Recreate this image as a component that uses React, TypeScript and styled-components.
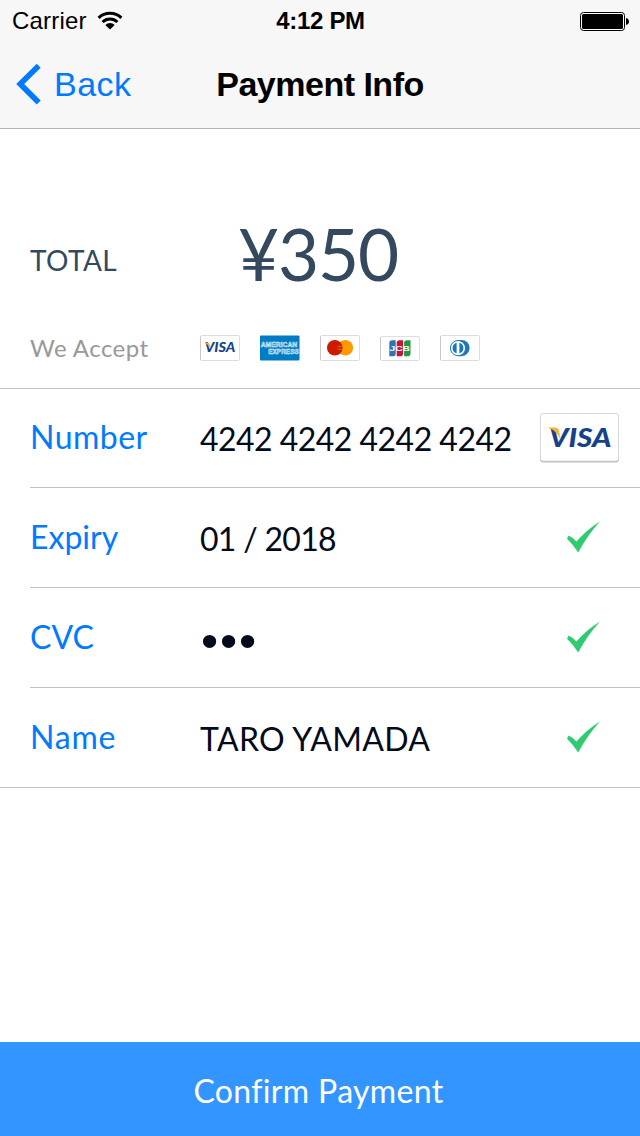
import React from "react";
import styled, { createGlobalStyle } from "styled-components";

const GlobalStyle = createGlobalStyle`
  * { box-sizing: border-box; }
  body { margin: 0; background: #fff; }
`;

const Screen = styled.div`
  width: 640px;
  height: 1136px;
  display: flex;
  flex-direction: column;
  background: #fff;
  overflow: hidden;
  white-space: nowrap;
  font-family: Lato, "Liberation Sans", sans-serif;
`;

const Header = styled.header`
  height: 129px;
  background: #f7f7f7;
  border-bottom: 1px solid #b2b2b2;
  font-family: "Liberation Sans", Arial, sans-serif;
`;

const StatusBar = styled.div`
  height: 40px;
  padding: 1px 11px 0 12px;
  display: grid;
  grid-template-columns: 1fr auto 1fr;
  align-items: center;
  font-size: 24px;
  line-height: 40px;
  color: #000;
`;

const Carrier = styled.div`
  display: flex;
  align-items: center;
  gap: 10px;
  letter-spacing: 0.2px;
`;

const Clock = styled.div`
  font-weight: 700;
  letter-spacing: -0.3px;
`;

const BatterySlot = styled.div`
  display: flex;
  justify-content: flex-end;
`;

const NavBar = styled.nav`
  height: 88px;
  padding: 0 16px;
  display: grid;
  grid-template-columns: 1fr auto 1fr;
  align-items: center;
  line-height: 88px;
  font-size: 34px;
`;

const BackButton = styled.a`
  display: flex;
  align-items: center;
  gap: 12px;
  color: #007aff;
  letter-spacing: 0.5px;
`;

const Title = styled.h1`
  margin: 0;
  font-size: 34px;
  font-weight: 700;
  letter-spacing: -0.5px;
  color: #000;
`;

const Summary = styled.section`
  height: 260px;
  padding: 84px 0 0 30px;
  border-bottom: 1px solid #c4c4c4;
`;

const TotalRow = styled.div`
  height: 80px;
  display: flex;
  align-items: center;
  color: #34495e;
`;

const TotalLabel = styled.div`
  width: 208px;
  padding-top: 14px;
  font-size: 28px;
  line-height: 34px;
  letter-spacing: 0.4px;
`;

const Amount = styled.div`
  padding-top: 2px;
  font-size: 71px;
  line-height: 80px;
  letter-spacing: -1.2px;
`;

const AcceptRow = styled.div`
  height: 30px;
  margin-top: 39px;
  display: flex;
  align-items: center;
`;

const AcceptLabel = styled.div`
  width: 170px;
  padding-top: 2px;
  font-size: 24px;
  line-height: 30px;
  letter-spacing: 0.45px;
  color: #999;
`;

const Brands = styled.div`
  display: flex;
  gap: 20px;
  padding-top: 2px;

  svg { display: block; }
`;

const Form = styled.main`
  flex: 1;
`;

const Field = styled.div<{ $first?: boolean; $last?: boolean }>`
  height: ${(p) => (p.$first ? 99 : 100)}px;
  margin-left: ${(p) => (p.$last ? 0 : 30)}px;
  padding-left: ${(p) => (p.$last ? 30 : 0)}px;
  display: flex;
  align-items: center;
  border-bottom: 1px solid #c4c4c4;
  font-size: 32px;
  line-height: 40px;
`;

const FieldLabel = styled.label<{ $track?: number }>`
  width: 170px;
  padding-bottom: 2px;
  color: #007aff;
  letter-spacing: ${(p) => p.$track ?? 0}px;
`;

const FieldValue = styled.div<{ $track?: number }>`
  flex: 1;
  padding-top: 2px;
  color: #030a1a;
  letter-spacing: ${(p) => p.$track ?? 0}px;
`;

const Dots = styled.div`
  padding: 3px 0 0 1px;
  font-family: "Liberation Sans", sans-serif;
  font-size: 49px;
  line-height: 40px;
  letter-spacing: 1.9px;
`;

const FieldIcon = styled.div<{ $right: number }>`
  margin-right: ${(p) => p.$right}px;

  svg { display: block; }
`;

const ConfirmButton = styled.button`
  height: 94px;
  padding: 4px 3px 0 0;
  border: 0;
  background: #3395ff;
  color: #fff;
  font-family: inherit;
  font-size: 32px;
  line-height: 40px;
  letter-spacing: 0.35px;
`;

const Wifi = () => (
  <svg width="26" height="20" viewBox="0 0 26 20">
    <g fill="none" stroke="#000" strokeWidth="3">
      <path d="M1.6 6.8 A16.5 16.5 0 0 1 24.4 6.8" />
      <path d="M5.6 11 A10.6 10.6 0 0 1 20.4 11" />
    </g>
    <path d="M13 18.6 L8.3 13.9 A6.8 6.8 0 0 1 17.7 13.9Z" fill="#000" />
  </svg>
);

const Battery = () => (
  <svg width="49" height="19" viewBox="0 0 49 19">
    <rect x="0.5" y="0.5" width="44" height="18" rx="3" fill="#fff" stroke="#000" />
    <rect x="2" y="2" width="41" height="15" rx="1.5" fill="#000" />
    <path d="M46 6 Q49 6.6 49 9.5 Q49 12.4 46 13Z" fill="#000" />
  </svg>
);

const Chevron = () => (
  <svg width="26" height="42" viewBox="0 0 26 42">
    <path d="M22.7 2.7 L4.2 21.1 L22.7 39.5" fill="none" stroke="#007aff" strokeWidth="5.6" />
  </svg>
);

const Check = () => (
  <svg width="36" height="34" viewBox="0 0 36 34">
    <path d="M2 17.8 L3.6 14.4 Q7.5 16 11.4 20.6 Q21 9 35 0.4 Q22.5 14 13.2 31.4 Q8.5 24 2 17.8Z" fill="#2ecc71" />
  </svg>
);

const CardFrame = ({ top = 0.5 }: { top?: number }) => (
  <>
    <rect x="0.5" y={top} width="39" height={25.5 - top} rx="1.5" fill="#fff" stroke="#dedede" />
    <path d={`M0.5 25 V${top + 1}`} stroke="#c8c8c8" />
  </>
);

const VisaMark = () => (
  <>
    <text x="9" y="34" fontFamily="Lato, sans-serif" fontWeight="900" fontStyle="italic" fontSize="27" fill="#15428b" textLength="62.5" lengthAdjust="spacingAndGlyphs">
      VISA
    </text>
    <path d="M7.5 14.6 H15.5 Q18.6 15 19 17.5 L20.6 26.5 Q17 18 7.5 14.6Z" fill="#f8b133" />
  </>
);

const VisaLarge = () => (
  <svg width="80" height="51" viewBox="0 0 80 51">
    <rect x="0.5" y="1.5" width="78" height="47.5" rx="2.5" fill="#b9b9b9" stroke="#b9b9b9" />
    <rect x="0.5" y="0.5" width="78" height="47.5" rx="2.5" fill="#fff" stroke="#d8d8d8" />
    <VisaMark />
  </svg>
);

const VisaSmall = () => (
  <svg width="40" height="26" viewBox="0 0 40 26">
    <CardFrame />
    <g transform="translate(0.3 0.6) scale(0.49)">
      <VisaMark />
    </g>
  </svg>
);

const Amex = () => (
  <svg width="40" height="26" viewBox="0 0 40 26">
    <rect x="0" y="0.5" width="39.5" height="25" rx="1" fill="#007bc4" />
    <g fill="#3f9fd8" stroke="#d9edf8" strokeWidth="0.55" fontFamily="Liberation Sans, sans-serif" fontWeight="700" fontSize="7.5">
      <text x="0.7" y="11.6" textLength="36.5" lengthAdjust="spacingAndGlyphs">AMERICAN</text>
      <text x="8.2" y="19.3" textLength="30.6" lengthAdjust="spacingAndGlyphs">EXPRESS</text>
    </g>
  </svg>
);

const Mastercard = () => (
  <svg width="40" height="26" viewBox="0 0 40 26">
    <CardFrame />
    <circle cx="25.3" cy="12.8" r="7.8" fill="#ff9a00" />
    <circle cx="14.8" cy="12.8" r="7.8" fill="#cc1b00" />
    <path d="M17.5 11.3 H22.5 M17.5 14.2 H22.5" stroke="#f08000" strokeWidth="0.8" />
  </svg>
);

const Jcb = () => (
  <svg width="40" height="26" viewBox="0 0 40 26">
    <CardFrame top={1.5} />
    <path d="M9.3 8 Q9.3 5.2 12.1 5.2 H15.7 V18.4 Q15.7 21.2 12.9 21.2 H9.3Z" fill="#2f73b3" />
    <path d="M16.7 8 Q16.7 5.2 19.5 5.2 H23.1 V18.4 Q23.1 21.2 20.3 21.2 H16.7Z" fill="#c3163a" />
    <path d="M24.1 8 Q24.1 5.2 26.9 5.2 H30.5 V18.4 Q30.5 21.2 27.7 21.2 H24.1Z" fill="#1f9a3f" />
    <text x="9.6" y="16" fontFamily="Liberation Sans, sans-serif" fontWeight="700" fontSize="8" fill="#fff" textLength="20.4" lengthAdjust="spacingAndGlyphs">
      JCB
    </text>
  </svg>
);

const Diners = () => (
  <svg width="40" height="26" viewBox="0 0 40 26">
    <CardFrame />
    <path d="M18 5 H21.5 A8.1 8.1 0 0 1 21.5 21.2 H18Z" fill="#1a78b5" />
    <circle cx="18" cy="13.1" r="7.6" fill="#fff" stroke="#1a78b5" strokeWidth="1" />
    <path d="M16.6 7.8 A5.5 5.5 0 0 0 16.6 18.4Z M19.4 7.8 A5.5 5.5 0 0 1 19.4 18.4Z" fill="#1a78b5" />
  </svg>
);

export default function App() {
  return (
    <Screen>
      <GlobalStyle />
      <Header>
        <StatusBar>
          <Carrier>
            Carrier
            <Wifi />
          </Carrier>
          <Clock>4:12 PM</Clock>
          <BatterySlot>
            <Battery />
          </BatterySlot>
        </StatusBar>
        <NavBar>
          <BackButton>
            <Chevron />
            Back
          </BackButton>
          <Title>Payment Info</Title>
        </NavBar>
      </Header>

      <Summary>
        <TotalRow>
          <TotalLabel>TOTAL</TotalLabel>
          <Amount>¥350</Amount>
        </TotalRow>
        <AcceptRow>
          <AcceptLabel>We Accept</AcceptLabel>
          <Brands>
            <VisaSmall />
            <Amex />
            <Mastercard />
            <Jcb />
            <Diners />
          </Brands>
        </AcceptRow>
      </Summary>

      <Form>
        <Field $first>
          <FieldLabel $track={0.5}>Number</FieldLabel>
          <FieldValue $track={-0.53}>4242 4242 4242 4242</FieldValue>
          <FieldIcon $right={20}>
            <VisaLarge />
          </FieldIcon>
        </Field>
        <Field>
          <FieldLabel>Expiry</FieldLabel>
          <FieldValue $track={-0.7}>01 / 2018</FieldValue>
          <FieldIcon $right={39}>
            <Check />
          </FieldIcon>
        </Field>
        <Field>
          <FieldLabel>CVC</FieldLabel>
          <FieldValue>
            <Dots>•••</Dots>
          </FieldValue>
          <FieldIcon $right={39}>
            <Check />
          </FieldIcon>
        </Field>
        <Field $last>
          <FieldLabel $track={0.8}>Name</FieldLabel>
          <FieldValue $track={0.3}>TARO YAMADA</FieldValue>
          <FieldIcon $right={39}>
            <Check />
          </FieldIcon>
        </Field>
      </Form>

      <ConfirmButton>Confirm Payment</ConfirmButton>
    </Screen>
  );
}
